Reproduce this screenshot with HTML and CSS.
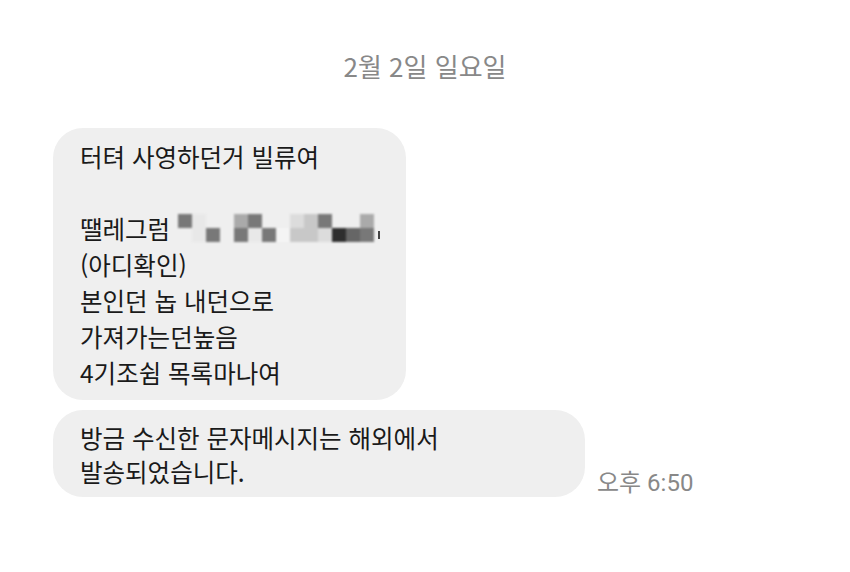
FILE: index.html
```html
<!DOCTYPE html>
<html lang="ko">
<head>
  <meta charset="UTF-8" />
  <meta name="viewport" content="width=device-width, initial-scale=1.0" />
  <title>메시지</title>
  <link rel="stylesheet" href="styles.css">
</head>
<body>
  <div class="date">2월 2일 일요일</div>

  <div class="chat">
    <div class="row">
      <div class="bubble">
        <p>터텨 사영하던거 빌류여</p>
        <p class="blank">&nbsp;</p>
        <p>땔레그럼<span class="mosaic"><i class="c3"></i><i class="c7"></i><i></i><i></i><i class="c4"></i><i class="c3"></i><i></i><i></i><i class="c6"></i><i class="c5"></i><i class="c3"></i><i></i><i></i><i class="c4"></i><i></i><i class="c7"></i><i class="c3"></i><i></i><i class="c3"></i><i class="c7"></i><i class="c3"></i><i class="c8"></i><i class="c5"></i><i class="c5"></i><i class="c6"></i><i class="c1"></i><i class="c2"></i><i class="c3"></i></span><span class="tick"></span></p>
        <p>(아디확인)</p>
        <p>본인던 놉 내던으로</p>
        <p>가져가는던높음</p>
        <p>4기조쉼 목록마나여</p>
      </div>
    </div>

    <div class="row">
      <div class="bubble wide">
        <p>방금 수신한 문자메시지는 해외에서 발송되었습니다.</p>
      </div>
      <span class="time">오후 6:50</span>
    </div>
  </div>
</body>
</html>
```

FILE: styles.css
```css
body {
  margin: 0;
  background: #fff;
  font-family: "Noto Sans CJK KR", "Noto Sans", sans-serif;
  color: #1a1a1a;
}

.date {
  text-align: center;
  font-size: 26px;
  line-height: 30px;
  color: #888;
  padding-top: 51px;
  margin-bottom: 47px;
}

.chat {
  padding: 0 20px 0 53px;
}

.row {
  display: flex;
  align-items: flex-end;
  gap: 12px;
  margin-bottom: 10px;
}

.bubble {
  background: #efefef;
  border-radius: 30px;
  padding: 11px 26px 9px 27px;
  max-width: 532px;
  box-sizing: border-box;
  font-size: 24.5px;
  line-height: 36px;
  word-break: keep-all;
}

.bubble.wide {
  padding-top: 11px;
  padding-bottom: 8px;
  line-height: 34px;
}

.bubble p {
  margin: 0;
}

.mosaic {
  display: inline-grid;
  grid-template-columns: repeat(14, 14px);
  grid-template-rows: 14px 14px;
  margin: 3px 0 0 8px;
  vertical-align: top;
  filter: blur(1px);
}

.mosaic i { background: transparent; }
.mosaic .c1 { background: #2e2e2e; }
.mosaic .c2 { background: #666; }
.mosaic .c3 { background: #787878; }
.mosaic .c4 { background: #aaa; }
.mosaic .c5 { background: #c8c8c8; }
.mosaic .c6 { background: #dcdcdc; }
.mosaic .c7 { background: #e8e8e8; }
.mosaic .c8 { background: #f4f4f4; }

.tick {
  display: inline-block;
  width: 2px;
  height: 8px;
  margin-left: 4px;
  background: #444;
}

.time {
  font-family: Roboto, "Noto Sans CJK KR", sans-serif;
  font-size: 24px;
  line-height: 28px;
  color: #888;
  padding-bottom: 0;
}
```
